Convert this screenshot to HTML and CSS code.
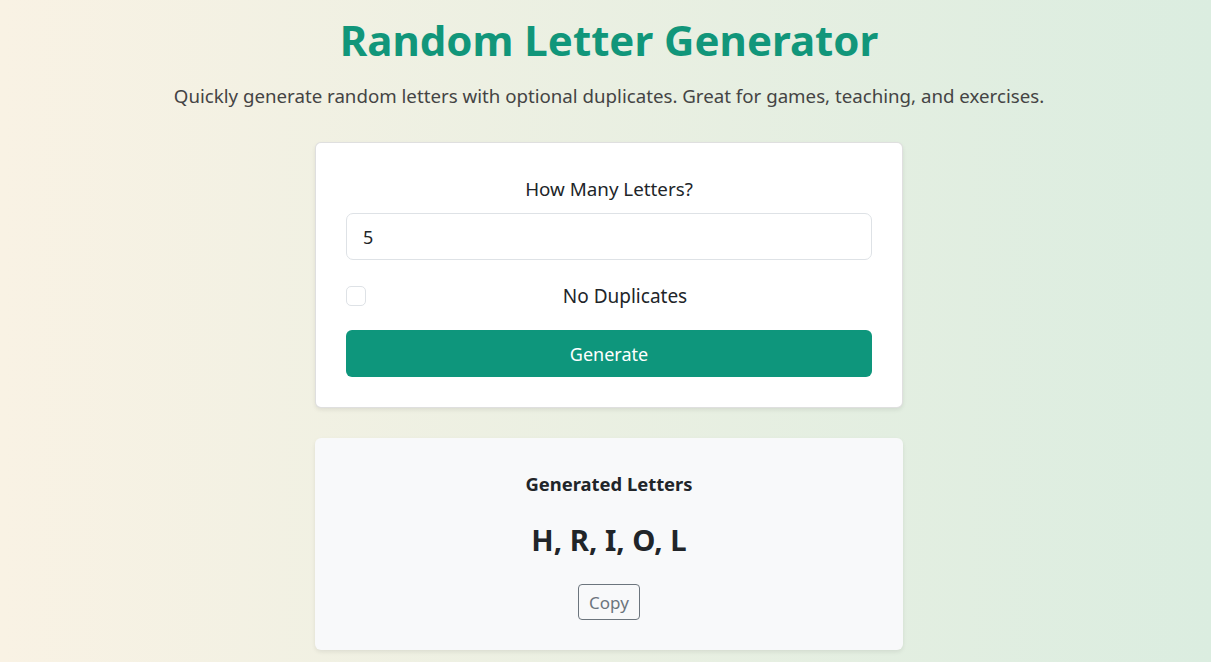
FILE: index.html
```html
<!DOCTYPE html>
<html lang="en">
<head>
<meta charset="utf-8">
<title>Random Letter Generator</title>
<link rel="stylesheet" href="styles.css">
</head>
<body>
<main class="page">
  <h1 class="title">Random Letter Generator</h1>
  <p class="lead">Quickly generate random letters with optional duplicates. Great for games, teaching, and exercises.</p>
  <section class="card">
    <label class="field-label" for="count">How Many Letters?</label>
    <input class="field" id="count" type="text" value="5">
    <div class="check-row">
      <span class="checkbox"></span>
      <span class="check-label">No Duplicates</span>
    </div>
    <button class="btn-generate" type="button">Generate</button>
  </section>
  <section class="card result">
    <h2 class="result-title">Generated Letters</h2>
    <div class="result-letters">H, R, I, O, L</div>
    <button class="btn-copy" type="button">Copy</button>
  </section>
</main>
</body>
</html>
```
FILE: styles.css
```css
* { box-sizing: border-box; }
html, body { margin: 0; height: 100%; }
body {
  background: linear-gradient(90deg, #f9f2e4 0%, #dbede0 100%);
  font-family: "Noto Sans", "Open Sans", sans-serif;
  color: #212529;
}
.page {
  display: flex;
  flex-direction: column;
  align-items: center;
  padding-top: 12px;
  padding-left: 7px;
}
.title {
  margin: 0;
  font-size: 42px;
  line-height: 56px;
  font-weight: 700;
  color: #11967a;
}
.lead {
  margin: 14px 0 0;
  font-size: 18.7px;
  line-height: 28px;
  color: #444;
}
.card {
  width: 588px;
  margin-top: 32px;
  background: #fff;
  border: 1px solid rgba(0,0,0,0.125);
  border-radius: 6px;
  box-shadow: 0 2px 4px rgba(0,0,0,0.08);
  padding: 30px;
  display: flex;
  flex-direction: column;
}
.field-label {
  text-align: center;
  font-size: 18.8px;
  line-height: 28px;
  margin-top: 2px;
}
.field {
  margin-top: 10px;
  height: 47px;
  border: 1px solid #dee2e6;
  border-radius: 7px;
  padding: 0 16px;
  font: inherit;
  font-size: 18px;
  color: #212529;
  background: #fff;
}
.check-row {
  display: flex;
  align-items: center;
  margin-top: 25px;
  height: 22px;
}
.checkbox {
  width: 20px;
  height: 20px;
  border: 1px solid #dee2e6;
  border-radius: 5px;
  background: #fff;
  flex: none;
}
.check-label {
  flex: 1;
  text-align: center;
  font-size: 19px;
  padding-left: 12px;
}
.btn-generate {
  margin-top: 23px;
  height: 47px;
  border: none;
  border-radius: 6px;
  background: #0e967c;
  color: #fff;
  font: inherit;
  font-size: 18px;
}
.result {
  margin-top: 30px;
  background: #f8f9fa;
  border-color: transparent;
  align-items: center;
  padding: 33px 30px 29px;
}
.result-title {
  margin: 0;
  font-size: 18.4px;
  line-height: 24px;
  font-weight: 700;
}
.result-letters {
  margin-top: 27px;
  font-size: 29.3px;
  line-height: 35px;
  font-weight: 700;
}
.btn-copy {
  margin-top: 26px;
  height: 36px;
  padding: 0 10.5px;
  border: 1px solid #6c757d;
  border-radius: 4px;
  background: transparent;
  color: #6c757d;
  font: inherit;
  font-size: 17px;
}
```
